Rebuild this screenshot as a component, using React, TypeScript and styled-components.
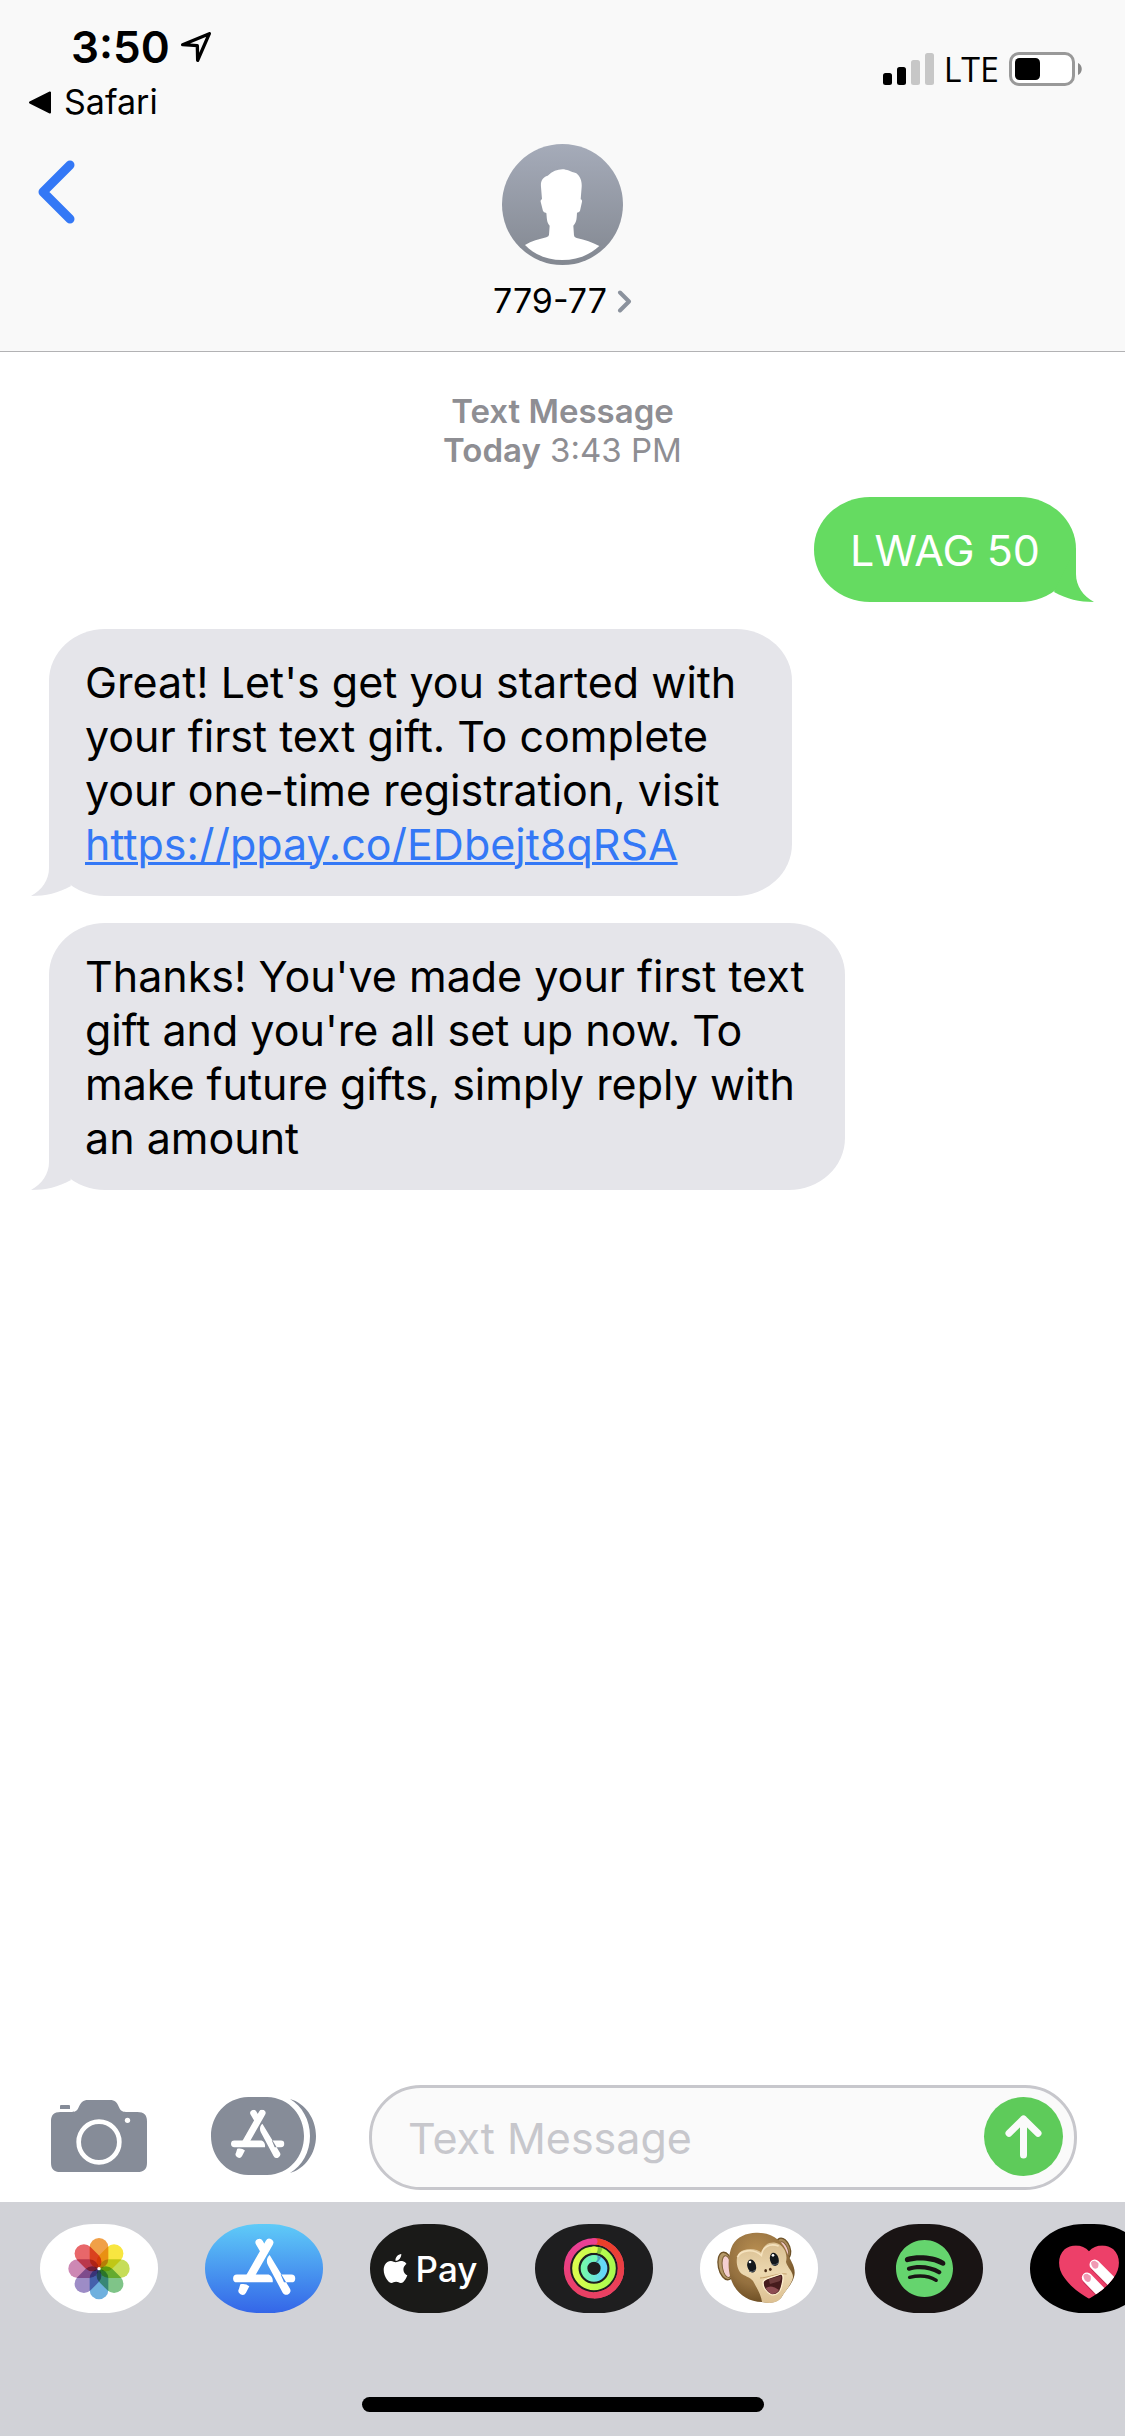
import React from "react";
import styled, { createGlobalStyle, css } from "styled-components";
import { SiApple, SiSpotify } from "react-icons/si";

const GlobalStyle = createGlobalStyle`
  *, *::before, *::after { box-sizing: border-box; }
  html, body { margin: 0; padding: 0; background: #ffffff; }
  body {
    font-family: Inter, "Liberation Sans", sans-serif;
    color: #000000;
  }
  button { font: inherit; color: inherit; background: none; border: 0; padding: 0; margin: 0; display: block; }
  svg { display: block; flex: none; }
`;

const Screen = styled.div`
  min-height: 100vh;
  display: flex;
  flex-direction: column;
  background: #ffffff;
  overflow: hidden;
`;

/* ---------- header ---------- */

const Header = styled.header`
  background: #f9f9f9;
  border-bottom: 1px solid #b2b2b4;
  padding-bottom: 30px;
`;

const StatusBar = styled.div`
  display: flex;
  justify-content: space-between;
  align-items: flex-start;
  height: 132px;
  padding: 20px 43px 0 28px;
`;

const StatusLeft = styled.div`
  display: flex;
  flex-direction: column;
`;

const Clock = styled.div`
  display: flex;
  align-items: center;
  gap: 11px;
  padding-left: 43px;
  font-size: 44px;
  line-height: 54px;
  font-weight: 600;
`;

const ReturnLink = styled.a`
  display: flex;
  align-items: center;
  gap: 12px;
  margin-top: 8px;
  font-size: 34px;
  line-height: 40px;
  color: #000000;
  text-decoration: none;
`;

const StatusRight = styled.div`
  display: flex;
  align-items: center;
  gap: 10px;
  padding-top: 29px;
`;

const Carrier = styled.span`
  font-family: "Open Sans", "Noto Sans", sans-serif;
  font-size: 34px;
  line-height: 40px;
  font-weight: 500;
`;

const NavBar = styled.nav`
  display: grid;
  grid-template-columns: 1fr auto 1fr;
  align-items: start;
  padding: 12px 38px 0;
`;

const BackButton = styled.button`
  justify-self: start;
  padding-top: 16px;
`;

const Contact = styled.button`
  display: flex;
  flex-direction: column;
  align-items: center;
  gap: 16px;
`;

const ContactName = styled.span`
  display: flex;
  align-items: center;
  gap: 10px;
  font-size: 34px;
  line-height: 40px;
`;

/* ---------- conversation ---------- */

const Thread = styled.main`
  flex: 1;
  display: flex;
  flex-direction: column;
  gap: 27px;
  padding: 40px 49px 0;
`;

const Stamp = styled.p`
  margin: 0;
  text-align: center;
  font-size: 33px;
  line-height: 39px;
  color: #8e8e93;
`;

const Strong = styled.b`
  font-weight: 600;
`;

type Side = "in" | "out";

const Bubble = styled.div<{ $side: Side; $max?: number }>`
  position: relative;
  align-self: ${(p) => (p.$side === "out" ? "flex-end" : "flex-start")};
  max-width: ${(p) => (p.$max ? `${p.$max}px` : "100%")};
  padding: 26px 36px 25px;
  border-radius: 56px / 52px;
  font-size: 43px;
  line-height: 54px;
  ${(p) =>
    p.$side === "out"
      ? css`
          background: #65db61;
          color: #ffffff;
        `
      : css`
          background: #e5e5ea;
          color: #000000;
        `}
`;

const Tail = styled.svg<{ $side: Side }>`
  position: absolute;
  bottom: 0;
  ${(p) =>
    p.$side === "out"
      ? css`
          right: -18px;
          fill: #65db61;
        `
      : css`
          left: -18px;
          transform: scaleX(-1);
          fill: #e5e5ea;
        `}
`;

const MessageLink = styled.a`
  color: #3478f6;
  text-decoration: underline;
  text-decoration-thickness: 3px;
`;

/* ---------- composer ---------- */

const Composer = styled.form`
  display: flex;
  align-items: center;
  padding: 0 48px 12px 51px;
`;

const ToolButton = styled.button<{ $gap: number }>`
  margin: 0 ${(p) => p.$gap}px 3px 0;
`;

const Field = styled.div`
  flex: 1;
  min-width: 0;
  display: flex;
  align-items: center;
  height: 105px;
  padding: 0 11px 3px 36px;
  border: 3px solid #c7c7cc;
  border-radius: 52px;
  background: #fafafa;
`;

const TextInput = styled.input`
  flex: 1;
  min-width: 0;
  padding: 3px 0 0;
  border: 0;
  outline: 0;
  background: transparent;
  font: inherit;
  font-size: 43px;
  line-height: 54px;
  &::placeholder { color: #c7c7cc; opacity: 1; }
`;

const SendButton = styled.button`
  width: 79px;
  height: 79px;
  border-radius: 50%;
  background: #5ecb5a;
`;

/* ---------- app drawer ---------- */

const Drawer = styled.footer`
  background: #d1d2d7;
  display: flex;
  flex-direction: column;
  align-items: center;
  gap: 84px;
  padding: 22px 0 24px;
`;

const AppRow = styled.div`
  align-self: stretch;
  display: flex;
  gap: 47px;
  padding-left: 40px;
  overflow: hidden;
`;

const AppPill = styled.button<{ $bg: string }>`
  flex: none;
  display: flex;
  align-items: center;
  justify-content: center;
  gap: 6px;
  width: 118px;
  height: 89px;
  border-radius: 54px / 44px;
  overflow: hidden;
  background: ${(p) => p.$bg};
`;

const PayText = styled.span`
  font-size: 35px;
  line-height: 44px;
  font-weight: 500;
  color: #ffffff;
`;

const HomeIndicator = styled.div`
  width: 402px;
  height: 15px;
  border-radius: 8px;
  background: #000000;
`;

/* ---------- drawings ---------- */

const LocationArrow = () => (
  <svg width="30" height="30" viewBox="541 95 90 90" aria-hidden="true">
    <path d="M546 133 L626 100 L591 180 L590 136 Z" fill="none" stroke="#000" strokeWidth="10" strokeLinejoin="round" />
  </svg>
);

const Signal = () => (
  <svg width="51" height="32" viewBox="0 0 51 32" aria-hidden="true">
    <rect x="0" y="20" width="9" height="12" rx="2.5" />
    <rect x="14" y="14" width="9" height="18" rx="2.5" />
    <rect x="28" y="7" width="9" height="25" rx="2.5" fill="#c7c7c7" />
    <rect x="42" y="0" width="9" height="32" rx="2.5" fill="#c7c7c7" />
  </svg>
);

const Battery = () => (
  <svg width="73" height="34" viewBox="0 0 73 34" aria-hidden="true">
    <rect x="1.5" y="1.5" width="63" height="31" rx="8.5" fill="#fff" stroke="#999" strokeWidth="3" />
    <rect x="6" y="6" width="25" height="22" rx="4.5" />
    <path d="M69 11 C74 13 74 21 69 23 Z" fill="#8a8a8a" />
  </svg>
);

const Avatar = () => (
  <svg width="121" height="121" viewBox="381 131 363 363" aria-hidden="true">
    <defs>
      <linearGradient id="avatar" x1="0" y1="0" x2="0" y2="1">
        <stop offset="0" stopColor="#a5abb9" />
        <stop offset="1" stopColor="#838891" />
      </linearGradient>
    </defs>
    <circle cx="562.5" cy="312.5" r="181.5" fill="url(#avatar)" />
    <path
      fill="#fff"
      d="M562 207 C576 207 586 214 604 219 C617 229 621 244 620 260 L617 297 Q622 298 621 304 L615 331 Q614 336 606 337 C605 352 606 364 595 376 L597 405 Q597 411 605 413 C630 419 652 426 673 437 C642 466 604 479 562 479 C518 479 480 464 450 434 C470 422 492 417 514 411 Q522 408 522 403 L524 376 C514 364 516 352 514 338 Q506 336 504 332 L497 304 Q496 298 501 297 L498 260 C496 240 504 231 518 226 C532 213 547 207 562 207 Z"
    />
  </svg>
);

const Camera = () => (
  <svg width="96" height="72" viewBox="153 120 288 216" aria-hidden="true">
    <path
      fill="#868c98"
      d="M180 138 Q180 135 183 135 H207 Q210 135 210 138 V147 H180 Z M181 156 H215 C228 156 231 152 236 142 C243 126 249 120 264 120 H330 C345 120 351 126 357 142 C362 152 366 156 378 156 H412 C432 156 441 165 441 184 V308 C441 327 432 336 412 336 H181 C162 336 153 327 153 308 V184 C153 165 162 156 181 156 Z"
    />
    <circle cx="297" cy="246" r="61" fill="none" stroke="#fff" strokeWidth="14" />
    <circle cx="382.5" cy="181" r="8" fill="#fff" />
  </svg>
);

const StoreGlyph = () => (
  <>
    <path d="M808 546 L749 650" fill="none" stroke="#fff" strokeWidth="24" strokeLinecap="round" />
    <path d="M778 546 L792 570" fill="none" stroke="#fff" strokeWidth="23" strokeLinecap="round" />
    <path
      fill="#fff"
      d="M711 641.5 H806 C815 645 820 654 818 665 H711 A11.7 11.7 0 0 1 711 641.5 Z M809 583 C800 590 798 603 804 614 L848 696 A12 12 0 0 0 870 684 Z M842 641.5 H874 A11.7 11.7 0 0 1 874 665 H852 Z M721 671 C730 668 741 670 748 677 L738 696 A12 12 0 0 1 717 684 Z"
    />
  </>
);

const AppsToggle = () => (
  <svg width="105" height="78" viewBox="633 111 315 234" aria-hidden="true">
    <path
      fill="#868c98"
      d="M745 111 H801 C870 113 912 168 912 228 C912 288 870 343 801 345 H745 C676 343 633 288 633 228 C633 168 676 113 745 111 Z M870 117 C916 130 948 176 948 228 C948 280 916 326 870 339 C906 318 930 276 930 228 C930 180 906 138 870 117 Z"
    />
    <svg x="692" y="149" width="162" height="145" viewBox="699 534 187 169">
      <StoreGlyph />
    </svg>
  </svg>
);

const petals = ["#f0a048", "#f8e640", "#c6dd58", "#7fc488", "#6fb0de", "#9d8cc6", "#cd88b4", "#e8676a"];

const Petal = styled.rect`
  mix-blend-mode: multiply;
`;

const Flower = styled.svg`
  isolation: isolate;
`;

const PhotosIcon = () => (
  <Flower width="118" height="89" viewBox="120 491 354 267" aria-hidden="true">
    {petals.map((fill, i) => (
      <Petal
        key={fill}
        x="269"
        y="533"
        width="56"
        height="91"
        rx="28"
        fill={fill}
        transform={`rotate(${i * 45} 297 625)`}
      />
    ))}
    <circle cx="297" cy="625" r="5" fill="#fff" />
  </Flower>
);

const StoreIcon = () => (
  <svg width="118" height="89" viewBox="615 490 354 267" aria-hidden="true">
    <StoreGlyph />
  </svg>
);

const RingsIcon = () => (
  <svg width="118" height="89" viewBox="585 490 354 267" aria-hidden="true">
    <defs>
      <linearGradient id="move" x1="0" y1="0" x2="0" y2="1">
        <stop offset="0" stopColor="#ea3f97" />
        <stop offset="1" stopColor="#ea4063" />
      </linearGradient>
      <linearGradient id="moveEnd" x1="0" y1="0" x2="0" y2="1">
        <stop offset="0" stopColor="#ec3f28" />
        <stop offset="1" stopColor="#e94064" />
      </linearGradient>
      <linearGradient id="exercise" x1="0" y1="0" x2="1" y2="0">
        <stop offset="0" stopColor="#dcfd4e" />
        <stop offset="1" stopColor="#a8fb4e" />
      </linearGradient>
      <linearGradient id="stand" x1="0" y1="0" x2="1" y2="0">
        <stop offset="0" stopColor="#74f8ad" />
        <stop offset="1" stopColor="#64d6fa" />
      </linearGradient>
    </defs>
    <g fill="none" strokeWidth="19">
      <circle cx="762" cy="623" r="81" stroke="url(#move)" />
      <path d="M762 542 A81 81 0 0 1 762 704" stroke="url(#moveEnd)" />
      <circle cx="762" cy="623" r="56" stroke="url(#exercise)" />
      <path d="M772 568 A56 56 0 0 1 784 572" stroke="#7fc436" />
      <path d="M761 567 H763" stroke="#dcfd4e" strokeLinecap="round" />
      <circle cx="762" cy="623" r="30" stroke="url(#stand)" strokeWidth="20" />
      <path d="M770 594 A30 30 0 0 1 778 598" stroke="#4da2b8" />
      <path d="M761 593 H763" stroke="#74f8b2" strokeLinecap="round" />
      <path d="M761 542 H763" stroke="#ea3f92" strokeLinecap="round" />
    </g>
  </svg>
);

const MonkeyIcon = () => (
  <svg width="118" height="89" viewBox="0 490 354 267" aria-hidden="true">
    <defs>
      <radialGradient id="fur" cx="0.42" cy="0.3" r="0.75">
        <stop offset="0" stopColor="#b98f52" />
        <stop offset="0.6" stopColor="#94703f" />
        <stop offset="1" stopColor="#66481f" />
      </radialGradient>
      <linearGradient id="face" x1="0" y1="0" x2="0" y2="1">
        <stop offset="0" stopColor="#d9be90" />
        <stop offset="0.5" stopColor="#ecd8b0" />
        <stop offset="1" stopColor="#dcc092" />
      </linearGradient>
    </defs>
    <ellipse cx="77" cy="616" rx="22" ry="42" transform="rotate(-12 77 616)" fill="#b69a6a" stroke="#6e5228" strokeWidth="4" />
    <ellipse cx="81" cy="618" rx="14" ry="33" transform="rotate(-10 81 618)" fill="#f4cfd0" stroke="#7d6036" strokeWidth="3" />
    <ellipse cx="250" cy="564" rx="20" ry="33" transform="rotate(-20 250 564)" fill="#a98a5a" stroke="#6e5228" strokeWidth="4" />
    <ellipse cx="252" cy="568" rx="12" ry="26" transform="rotate(-20 252 568)" fill="#efc6c4" stroke="#7d6036" strokeWidth="3" />
    <path d="M168 516 C214 514 250 540 262 578 C270 598 284 614 284 636 C283 664 260 684 248 704 C236 728 210 728 186 724 C140 724 104 694 92 652 C82 622 84 580 98 552 C112 528 138 517 168 516 Z" fill="url(#fur)" />
    <path d="M185 577 C172 562 134 560 118 576 C104 592 110 628 126 640 C138 648 156 652 162 666 C174 688 184 706 186 724 C212 730 236 728 248 704 C260 686 276 668 279 650 C280 634 262 620 258 604 C264 580 252 552 226 546 C204 543 188 556 185 577 Z" fill="url(#face)" />
    <path d="M112 590 C120 568 160 562 184 584 C186 560 208 546 236 556" fill="none" stroke="#fff0cf" strokeWidth="5" opacity="0.7" />
    <ellipse cx="155" cy="616" rx="13" ry="20" transform="rotate(-14 155 616)" fill="#14181c" />
    <ellipse cx="223" cy="596" rx="13" ry="20" transform="rotate(-14 223 596)" fill="#14181c" />
    <circle cx="150" cy="604" r="4" fill="#fff" />
    <circle cx="219" cy="584" r="4" fill="#fff" />
    <path d="M147 632 Q158 637 167 627 M215 612 Q227 616 236 606" fill="none" stroke="#59626b" strokeWidth="3" />
    <ellipse cx="197" cy="630" rx="4" ry="5" fill="#4b2d17" />
    <ellipse cx="211" cy="626" rx="4" ry="5" fill="#4b2d17" />
    <path d="M180 652 C200 652 238 636 260 640" fill="none" stroke="#c4a06c" strokeWidth="3" />
    <path d="M190 662 C200 650 226 648 243 640 C252 640 250 660 244 680 C240 698 226 704 214 702 C200 696 186 678 190 662 Z" fill="#461b1c" stroke="#fff0cf" strokeWidth="4" />
    <path d="M206 656 L243 645 Q245 656 238 662 L210 670 Z" fill="#6d3b3b" />
    <path d="M197 682 Q216 670 237 688 Q228 702 214 700 Q204 696 197 682 Z" fill="#8d4d52" />
  </svg>
);

const HeartIcon = () => (
  <svg width="118" height="89" viewBox="990 490 354 267" aria-hidden="true">
    <defs>
      <clipPath id="heart">
        <path d="M1167 572 C1184 551 1220 549 1240 566 C1264 588 1260 626 1242 650 C1224 676 1194 700 1167 714 C1140 700 1110 676 1092 650 C1074 626 1070 588 1094 566 C1114 549 1150 551 1167 572 Z" />
      </clipPath>
    </defs>
    <g clipPath="url(#heart)">
      <rect x="1060" y="540" width="220" height="190" fill="#ed4069" />
      <g fill="none" strokeLinecap="round" strokeWidth="33">
        <path d="M1187 617 L1262 694" stroke="#a82347" opacity="0.5" />
        <path d="M1163 656 L1232 728" stroke="#a82347" opacity="0.5" />
        <path d="M1184 612 L1262 690" stroke="#fff" strokeWidth="31" />
        <path d="M1161 651 L1232 724" stroke="#fff" strokeWidth="31" />
      </g>
      <path d="M1173 606 Q1176 599 1185 600 L1195 607 Q1198 624 1186 624 Q1175 622 1173 606 Z" fill="#f09ab4" />
      <path d="M1150 645 Q1153 638 1162 639 L1172 646 Q1175 664 1163 664 Q1152 661 1150 645 Z" fill="#f09ab4" />
    </g>
  </svg>
);

const BubbleTail = ({ side }: { side: Side }) => (
  <Tail $side={side} width="45" height="60" viewBox="0 0 45 60" aria-hidden="true">
    <path d="M27 6 V32 C27 44 34 54 45 60 C30 60 18 57 5 50 Z" />
  </Tail>
);

/* ---------- page ---------- */

export default function App() {
  return (
    <Screen>
      <GlobalStyle />
      <Header>
        <StatusBar>
          <StatusLeft>
            <Clock>
              3:50
              <LocationArrow />
            </Clock>
            <ReturnLink href="#safari">
              <svg width="24" height="23" viewBox="0 0 24 23" aria-hidden="true">
                <path d="M2 11.5 L22 1.5 V21.5 Z" stroke="#000" strokeWidth="2" strokeLinejoin="round" />
              </svg>
              Safari
            </ReturnLink>
          </StatusLeft>
          <StatusRight>
            <Signal />
            <Carrier>LTE</Carrier>
            <Battery />
          </StatusRight>
        </StatusBar>
        <NavBar>
          <BackButton type="button" aria-label="Back">
            <svg width="37" height="64" viewBox="0 0 37 64" aria-hidden="true">
              <path d="M32 5 L5 32 L32 59" fill="none" stroke="#3478f6" strokeWidth="9" strokeLinecap="round" strokeLinejoin="round" />
            </svg>
          </BackButton>
          <Contact type="button">
            <Avatar />
            <ContactName>
              779-77
              <svg width="15" height="23" viewBox="0 0 15 23" aria-hidden="true">
                <path d="M3 2.5 L12 11.5 L3 20.5" fill="none" stroke="#8b929d" strokeWidth="4" strokeLinecap="round" strokeLinejoin="round" />
              </svg>
            </ContactName>
          </Contact>
        </NavBar>
      </Header>

      <Thread>
        <Stamp>
          <Strong>Text Message</Strong>
          <br />
          <Strong>Today</Strong> 3:43 PM
        </Stamp>
        <Bubble $side="out">
          LWAG 50
          <BubbleTail side="out" />
        </Bubble>
        <Bubble $side="in" $max={743}>
          Great! Let's get you started with your first text gift. To complete your one-time registration, visit{" "}
          <MessageLink href="https://ppay.co/EDbejt8qRSA">https://ppay.co/EDbejt8qRSA</MessageLink>
          <BubbleTail side="in" />
        </Bubble>
        <Bubble $side="in" $max={796}>
          Thanks! You've made your first text gift and you're all set up now. To make future gifts, simply reply with an
          amount
          <BubbleTail side="in" />
        </Bubble>
      </Thread>

      <Composer onSubmit={(e: React.FormEvent) => e.preventDefault()}>
        <ToolButton type="button" aria-label="Camera" $gap={64}>
          <Camera />
        </ToolButton>
        <ToolButton type="button" aria-label="Apps" $gap={53}>
          <AppsToggle />
        </ToolButton>
        <Field>
          <TextInput type="text" placeholder="Text Message" aria-label="Text Message" />
          <SendButton type="submit" aria-label="Send">
            <svg width="79" height="79" viewBox="852 109 237 237" aria-hidden="true">
              <path d="M970.5 283 V175 M927 218 L970.5 175 L1014 218" fill="none" stroke="#fafafa" strokeWidth="21" strokeLinecap="round" strokeLinejoin="round" />
            </svg>
          </SendButton>
        </Field>
      </Composer>

      <Drawer>
        <AppRow>
          <AppPill type="button" aria-label="Photos" $bg="#ffffff">
            <PhotosIcon />
          </AppPill>
          <AppPill type="button" aria-label="App Store" $bg="linear-gradient(#5fcbf8, #3466e8)">
            <StoreIcon />
          </AppPill>
          <AppPill type="button" aria-label="Apple Pay" $bg="#1a1a18">
            <SiApple size={29} color="#ffffff" />
            <PayText>Pay</PayText>
          </AppPill>
          <AppPill type="button" aria-label="Activity" $bg="#1e1e1f">
            <RingsIcon />
          </AppPill>
          <AppPill type="button" aria-label="Animoji" $bg="#ffffff">
            <MonkeyIcon />
          </AppPill>
          <AppPill type="button" aria-label="Spotify" $bg="#191414">
            <SiSpotify size={57} color="#65d46e" />
          </AppPill>
          <AppPill type="button" aria-label="Digital Touch" $bg="#000000">
            <HeartIcon />
          </AppPill>
        </AppRow>
        <HomeIndicator />
      </Drawer>
    </Screen>
  );
}
